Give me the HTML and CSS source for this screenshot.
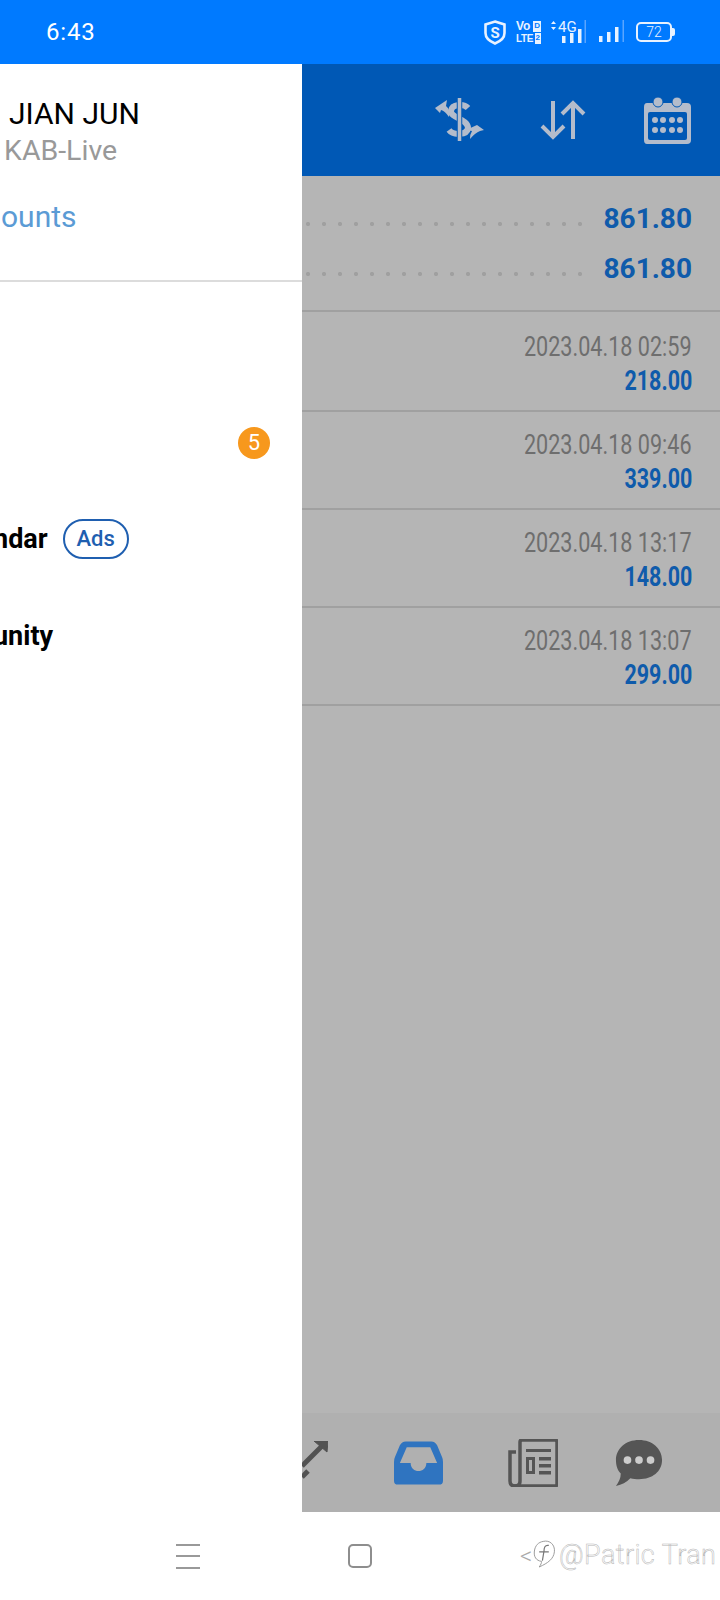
FILE: index.html
```html
<!DOCTYPE html>
<html lang="en">
<head>
<meta charset="utf-8">
<title>Mailbox</title>
<link rel="stylesheet" href="styles.css">
</head>
<body>
<div class="phone">
  <header class="status">
    <span class="clock">6:43</span>
    <div class="status-icons">
      <svg class="ic-shield" width="22" height="25" viewBox="0 0 22 25"><path d="M11 1.500 20.500 4.500V13C20.500 18 16 21.500 11 23.500 6 21.500 1.500 18 1.500 13V4.500Z" fill="none" stroke="#e8f2ff" stroke-width="2.600"/><text x="11" y="17.500" text-anchor="middle" class="svg-s">S</text></svg>
      <div class="volte"><span class="volte-top">Vo<b>D</b></span><span class="volte-bot">LTE<b>2</b></span></div>
      <svg class="ic-4g" width="38" height="30" viewBox="0 0 38 30"><path d="M3 7 5.500 4 8 7ZM3 10 5.500 13 8 10Z" fill="#e8f2ff"/><text x="10" y="15" class="svg-4g">4G</text><path d="M14 19h3.500v7H14zM22 16h3.500v10H22zM30 12h3.500v14H30z" fill="#e8f2ff"/><path d="M36.500 3h1.500v23h-1.500z" fill="#5aa5ff"/></svg>
      <svg class="ic-signal" width="27" height="24" viewBox="0 0 27 24"><path d="M1 16h3.500v6H1zM9 12h3.500v10H9zM17 7h3.500v15H17z" fill="#e8f2ff"/><path d="M24.500 0h1.500v22h-1.500z" fill="#5aa5ff"/></svg>
      <div class="battery"><div class="battery-body">72</div><div class="battery-tip"></div></div>
    </div>
  </header>

  <div class="screen">
    <main class="main">
      <div class="toolbar">
        <svg width="50" height="46" viewBox="0 0 50 46" class="ic-dollar">
          <path d="M33 11C29 6.500 17 6.500 16 14 15.500 21 33 22 33 31 32 38.500 18 38.500 14 33" fill="none" stroke="#b4bccb" stroke-width="6"/>
          <path d="M24.500 1V44" stroke="#0058b5" stroke-width="5.500"/>
          <path d="M24.500 1V44" stroke="#b4bccb" stroke-width="3.500"/>
          <path d="M0 11 12 3 11 9Q16 13 14 20 10 14 6 13L5 16Z" fill="#b4bccb"/>
          <path d="M31 33 42 28 49 33 45 34Q40 36 35 42 35 37 37 34Z" fill="#b4bccb"/>
        </svg>
        <svg width="48" height="40" viewBox="0 0 48 40" class="ic-sort">
          <path d="M13 1V37M2 26 13 37 24 26M33 39V3M22 14 33 3 44 14" fill="none" stroke="#b4bccb" stroke-width="4"/>
        </svg>
        <svg width="47" height="47" viewBox="0 0 47 47" class="ic-cal">
          <path d="M3 6H43Q47 6 47 10V43Q47 47 43 47H3Q0 47 0 43V10Q0 6 3 6Z" fill="#b4bccb"/>
          <circle cx="14" cy="5" r="5" fill="#b4bccb" stroke="#0058b5" stroke-width="1"/><circle cx="33" cy="5" r="5" fill="#b4bccb" stroke="#0058b5" stroke-width="1"/>
          <rect x="4" y="15" width="39" height="28" rx="2" fill="#0058b5"/>
          <g fill="#b4bccb"><circle cx="11" cy="23" r="3"/><circle cx="19" cy="23" r="3"/><circle cx="28" cy="23" r="3"/><circle cx="36" cy="23" r="3"/><circle cx="11" cy="33" r="3"/><circle cx="19" cy="33" r="3"/><circle cx="28" cy="33" r="3"/><circle cx="36" cy="33" r="3"/></g>
        </svg>
      </div>
      <section class="content">
        <div class="summary">
          <div class="sum-row"><span class="leader"></span><span class="sum-val">861.80</span></div>
          <div class="sum-row"><span class="leader"></span><span class="sum-val">861.80</span></div>
        </div>
        <div class="deal"><span class="deal-date">2023.04.18 02:59</span><span class="deal-val">218.00</span></div>
        <div class="deal"><span class="deal-date">2023.04.18 09:46</span><span class="deal-val">339.00</span></div>
        <div class="deal"><span class="deal-date">2023.04.18 13:17</span><span class="deal-val">148.00</span></div>
        <div class="deal"><span class="deal-date">2023.04.18 13:07</span><span class="deal-val">299.00</span></div>
      </section>
      <nav class="tabs">
        <svg width="26" height="44" viewBox="0 0 26 44" class="tab-arrows"><path d="M0 25 21 4" stroke="#525252" stroke-width="5" fill="none"/><path d="M12 0 26 0 25 11Z" fill="#525252" stroke="#525252" stroke-width="1"/><path d="M0 36 6 30" stroke="#525252" stroke-width="5" fill="none"/></svg>
        <svg width="49" height="44" viewBox="0 0 50 44" class="tab-inbox"><path d="M12 0H38Q42 0 44 4L49 16Q50 18 50 21V40Q50 44 46 44H4Q0 44 0 40V21Q0 18 1 16L6 4Q8 0 12 0Z" fill="#2f74c0"/><path d="M13 6H37L44 22H33C33 33 17 33 17 22H6Z" fill="#b0b0b0"/></svg>
        <svg width="50" height="48" viewBox="0 0 50 48" class="tab-news"><path d="M12 3Q12 1 14 1H47Q49 1 49 3V45Q49 47 47 47H6" fill="none" stroke="#555" stroke-width="3.500"/><path d="M12 3V42Q12 47 7 47 2 47 2 42V13H8" fill="none" stroke="#555" stroke-width="3.500"/><path d="M18 10H43V13H18zM18 18H27V35H18zM31 18H43V21.500H31zM31 25H43V28.500H31zM31 32H43V35.500H31z" fill="#555"/><path d="M21 21H24V32H21z" fill="#b0b0b0"/></svg>
        <svg width="48" height="48" viewBox="0 0 50 48" class="tab-chat"><path d="M25 0C39 0 49 9 49 21 49 33 39 41 25 41 22 41 19 41 16 40 12 44 7 47 1 48 4 44 6 40 6 35 2 31 1 26 1 21 1 9 11 0 25 0Z" fill="#555"/><circle cx="13" cy="21" r="4" fill="#ccc"/><circle cx="25" cy="21" r="4" fill="#ccc"/><circle cx="37" cy="21" r="4" fill="#ccc"/></svg>
      </nav>
    </main>

    <aside class="drawer">
      <div class="drawer-head">
        <div class="name">JIAN JUN</div>
        <div class="server">KAB-Live</div>
        <div class="accounts">ounts</div>
      </div>
      <ul class="menu">
        <li class="menu-row menu-row-badge"><span class="badge">5</span></li>
        <li class="menu-row menu-row-ads"><span class="menu-label">ndar</span><span class="ads">Ads</span></li>
        <li class="menu-row menu-row-comm"><span class="menu-label">unity</span></li>
      </ul>
    </aside>
  </div>

  <footer class="sysnav">
    <div class="hamburger"><i></i><i></i><i></i></div>
    <div class="home"></div>
    <div class="back">&lt;</div>
  </footer>
  <div class="watermark">
    <svg width="24" height="34" viewBox="0 0 30 40"><path d="M14 3C22 1 29 7 28 16 27 25 20 30 9 35 11 32 12 30 12 28 5 27 2 22 3 15 4 8 8 4 14 3Z" fill="none" stroke="#999" stroke-width="1.200"/><path d="M21 8C16 7 15 11 15 15L13 27M9 16H21" fill="none" stroke="#777" stroke-width="1.500"/></svg>
    <span>@Patric Tran</span>
  </div>
</div>
</body>
</html>
```

FILE: styles.css
```css
* { box-sizing: border-box; }
html, body { margin: 0; padding: 0; }
body { font-family: Roboto, "Liberation Sans", sans-serif; background: #fff; }
.phone { width: 720px; height: 1600px; display: flex; flex-direction: column; position: relative; overflow: hidden; }

.status { height: 64px; background: #007aff; display: flex; align-items: center; justify-content: space-between; padding: 0 46px; flex: none; color: #fff; }
.clock { font-size: 24px; letter-spacing: .8px; }
.status-icons { display: flex; align-items: center; }
.ic-shield { margin-right: 10px; }
.svg-s { font: 700 15px Roboto, sans-serif; fill: #e8f2ff; }
.svg-4g { font: 400 15px Roboto, sans-serif; fill: #e8f2ff; }
.volte { display: flex; flex-direction: column; gap: 1px; width: 25px; margin-right: 7px; font: 700 10px/11px "Liberation Sans", sans-serif; color: #e8f2ff; }
.volte-top { display: flex; justify-content: space-between; font-size: 12px; }
.volte-bot { display: flex; justify-content: space-between; letter-spacing: -.3px; }
.volte b { background: #e8f2ff; color: #007aff; padding: 0 1px; line-height: 10px; font-size: 8px; letter-spacing: 0; }
.ic-4g { margin-right: 12px; }
.ic-signal { margin-right: 11px; }
.battery { display: flex; align-items: center; margin-right: -1px; }
.battery-body { width: 36px; height: 20px; border: 2px solid #e8f2ff; border-radius: 5px; font-size: 14px; line-height: 16px; text-align: center; color: #e8f2ff; font-weight: 300; }
.battery-tip { width: 3px; height: 8px; background: #e8f2ff; border-radius: 0 2px 2px 0; }

.screen { flex: 1; position: relative; display: flex; min-height: 0; }
.main { flex: 1; display: flex; flex-direction: column; background: #b5b5b5; }

.toolbar { height: 112px; flex: none; background: #0058b5; display: flex; align-items: center; justify-content: flex-end; padding: 0 29px 0 0; }
.ic-dollar { margin-right: 55px; }
.ic-sort { margin-right: 56px; }

.content { flex: 1; padding-left: 302px; }
.summary { height: 136px; border-bottom: 2px solid #a0a0a0; padding: 17px 28px 0 4px; }
.sum-row { height: 50px; display: flex; align-items: center; gap: 18px; }
.leader { flex: 1; height: 4px; margin-top: 12px; background: radial-gradient(circle at 2px 2px, #a0a0a0 1.9px, transparent 2.3px) 0 0 / 16px 4px repeat-x; }
.sum-val { font-size: 28px; font-weight: 700; color: #0f5bab; }

.deal { height: 98px; border-bottom: 2px solid #a0a0a0; display: flex; flex-direction: column; align-items: flex-end; padding: 16px 28px 0 0; }
.summary + .deal { height: 100px; padding-top: 18px; }
.deal-date { font-size: 27px; line-height: 34px; color: #6e6e6e; transform: scaleX(.8); transform-origin: right; white-space: nowrap; }
.deal-val { font-size: 27px; line-height: 34px; font-weight: 700; color: #0f5bab; transform: scaleX(.795); transform-origin: right; }

.tabs { height: 99px; flex: none; background: #b0b0b0; display: flex; align-items: center; padding-left: 302px; }
.tab-arrows { margin-right: 66px; }
.tab-inbox { margin-right: 65px; }
.tab-news { margin-right: 57px; }

.drawer { position: absolute; left: 0; top: 0; bottom: 0; width: 302px; background: #fff; display: flex; flex-direction: column; }
.drawer-head { height: 218px; border-bottom: 2px solid #dcdcdc; padding: 32px 0 0 0; flex: none; }
.name { font-size: 30px; line-height: 36px; color: #000; padding-left: 9px; }
.server { font-size: 28.500px; line-height: 38px; color: #999; padding-left: 4px; }
.accounts { font-size: 30px; line-height: 36px; color: #5b9bd5; margin-top: 29px; padding-left: 1px; }

.menu { list-style: none; margin: 0; padding: 113px 0 0 0; }
.menu-row { height: 95px; display: flex; align-items: center; }
.menu-row-badge { justify-content: flex-end; padding-right: 32px; }
.menu-row-ads { height: 97px; gap: 15px; }
.menu-row-comm { height: 98px; }
.menu-label { font-size: 27px; font-weight: 700; color: #000; margin-left: -7px; }
.badge { width: 32px; height: 32px; border-radius: 50%; background: #f7981d; color: #fff; font-size: 22px; line-height: 32px; text-align: center; }
.ads { width: 66px; height: 40px; border: 2px solid #1f5fb0; border-radius: 20px; color: #1f5fb0; font-size: 22px; font-weight: 500; line-height: 36px; text-align: center; }

.sysnav { height: 88px; flex: none; background: #fff; display: flex; align-items: center; padding-left: 176px; }
.hamburger { width: 24px; height: 25px; display: flex; flex-direction: column; justify-content: space-between; margin-right: 148px; }
.hamburger i { display: block; height: 2px; background: #999; }
.home { width: 24px; height: 24px; border: 2px solid #8e8e8e; border-radius: 5px; }
.back { font-size: 24px; font-weight: 300; color: #aaa; margin-left: 148px; }

.watermark { position: absolute; left: 532px; top: 1538px; display: flex; align-items: center; gap: 3px; }
.watermark span { font-size: 27px; font-weight: 300; color: #fff; -webkit-text-stroke: .5px #b5b5b5; letter-spacing: .4px; white-space: nowrap; }
```
